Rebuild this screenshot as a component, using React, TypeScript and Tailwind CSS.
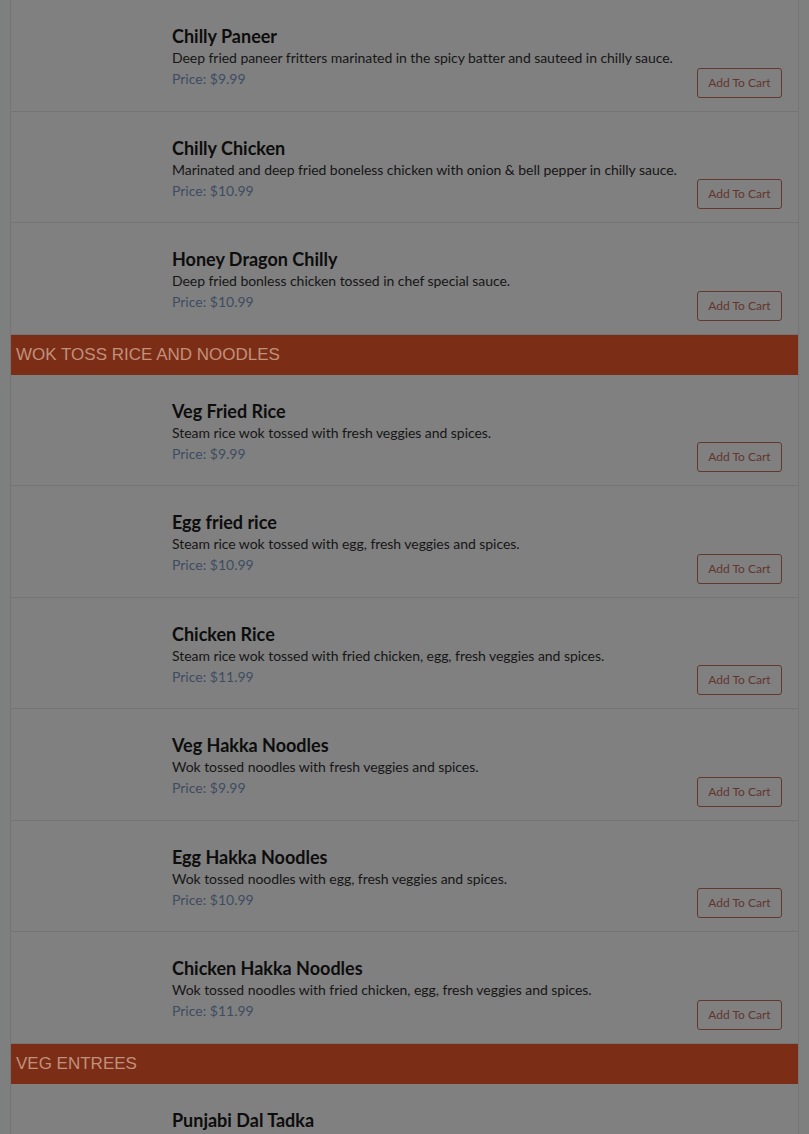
type MenuItem = {
  name: string;
  description: string;
  price: string;
};

type Section = {
  title?: string;
  items: MenuItem[];
};

const SECTIONS: Section[] = [
  {
    items: [
      {
        name: "Chilly Paneer",
        description: "Deep fried paneer fritters marinated in the spicy batter and sauteed in chilly sauce.",
        price: "$9.99",
      },
      {
        name: "Chilly Chicken",
        description: "Marinated and deep fried boneless chicken with onion & bell pepper in chilly sauce.",
        price: "$10.99",
      },
      {
        name: "Honey Dragon Chilly",
        description: "Deep fried bonless chicken tossed in chef special sauce.",
        price: "$10.99",
      },
    ],
  },
  {
    title: "WOK TOSS RICE AND NOODLES",
    items: [
      { name: "Veg Fried Rice", description: "Steam rice wok tossed with fresh veggies and spices.", price: "$9.99" },
      { name: "Egg fried rice", description: "Steam rice wok tossed with egg, fresh veggies and spices.", price: "$10.99" },
      {
        name: "Chicken Rice",
        description: "Steam rice wok tossed with fried chicken, egg, fresh veggies and spices.",
        price: "$11.99",
      },
      { name: "Veg Hakka Noodles", description: "Wok tossed noodles with fresh veggies and spices.", price: "$9.99" },
      { name: "Egg Hakka Noodles", description: "Wok tossed noodles with egg, fresh veggies and spices.", price: "$10.99" },
      {
        name: "Chicken Hakka Noodles",
        description: "Wok tossed noodles with fried chicken, egg, fresh veggies and spices.",
        price: "$11.99",
      },
    ],
  },
  {
    title: "VEG ENTREES",
    items: [
      { name: "Punjabi Dal Tadka", description: "Yellow lentils tempered with cumin, garlic and spices.", price: "$10.99" },
      { name: "Dal Makhani", description: "Black lentils slow cooked with butter and cream.", price: "$11.99" },
    ],
  },
];

function ItemRow({ item }: { item: MenuItem }) {
  return (
    <div className="flex h-[111.5px] border-b border-[#747474]">
      {/* image slot (picture not loaded) */}
      <div className="w-[161px] shrink-0" />
      <div className="flex-1 pt-[25px]">
        <div className="text-[18px] leading-[22px] font-bold text-[#0d0d0d]">{item.name}</div>
        <div className="text-[14px] leading-[21px] tracking-[-0.05px] text-[#161616]">{item.description}</div>
        <div className="text-[14px] leading-[21px] text-[#3e4c62]">Price: {item.price}</div>
      </div>
      <div className="flex items-end pb-[13px] pr-[16px]">
        <button className="h-[30px] w-[85px] rounded-[3px] border border-[#62382f] text-[12px] text-[#62352f]">
          Add To Cart
        </button>
      </div>
    </div>
  );
}

export default function App() {
  return (
    <div className="min-h-screen bg-[#7e7f7f] px-[10px] font-['Lato',sans-serif]">
      <div className="border-x border-[#757575] bg-[#808080]">
        {SECTIONS.map((section, i) => (
          <div key={i}>
            {section.title && (
              <div className="flex h-[40px] items-center bg-[#7c2d15] pl-[5px] font-['Liberation_Sans',Arial,sans-serif] text-[17px] text-[#c0917d]">
                {section.title}
              </div>
            )}
            {section.items.map((item) => (
              <ItemRow key={item.name} item={item} />
            ))}
          </div>
        ))}
      </div>
    </div>
  );
}
